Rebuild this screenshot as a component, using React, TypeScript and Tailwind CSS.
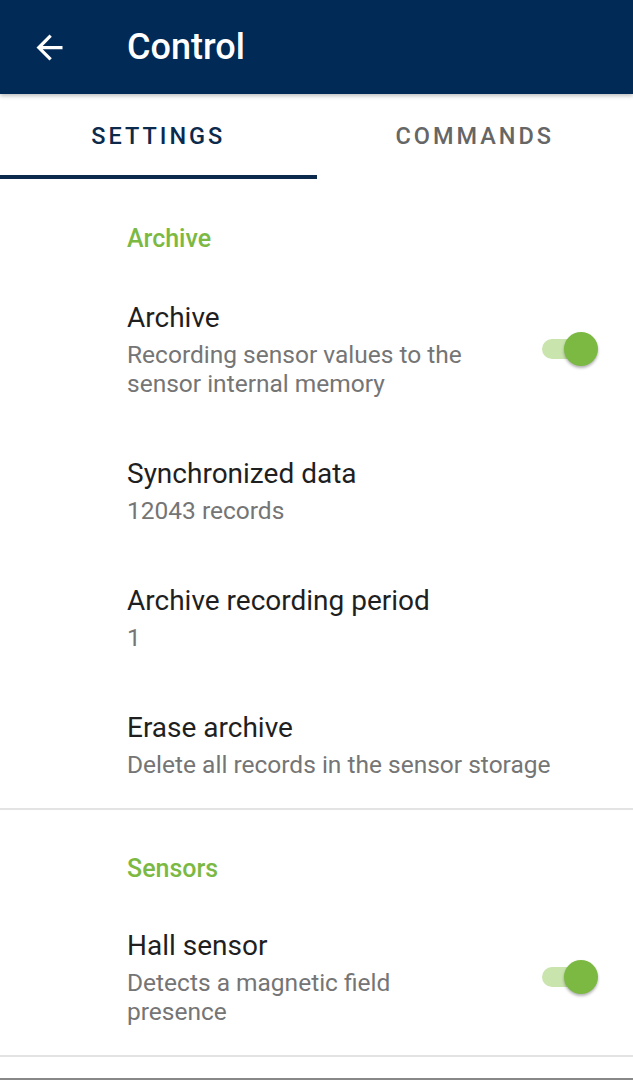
import React from "react";

function Toggle() {
  return (
    <div className="relative w-[58px] h-[36px] flex items-center shrink-0">
      <div className="absolute left-[2px] top-[8px] w-[50px] h-[20px] rounded-full bg-[#c9e4ad]" />
      <div className="absolute right-0 top-[1px] w-[34px] h-[34px] rounded-full bg-[#7cb943] shadow-[0_2px_3px_rgba(0,0,0,0.3)]" />
    </div>
  );
}

function SectionHeader({ label, first }: { label: string; first?: boolean }) {
  return (
    <div className={first ? "h-[91px] shrink-0 pl-[127px] pt-[44px]" : "h-[89px] shrink-0 pl-[127px] pt-[44px]"}>
      <div className="text-[25px] leading-[30px] font-medium text-[#7cb943]">{label}</div>
    </div>
  );
}

function Item({
  title,
  subtitle,
  toggle,
}: {
  title: string;
  subtitle: string;
  toggle?: boolean;
}) {
  return (
    <div className="shrink-0 flex items-center pl-[127px] pr-[35px] py-[29px]">
      <div className={toggle ? "flex-1 pr-[60px]" : "flex-1"}>
        <div className="text-[28px] leading-[36px] text-[#1f1f1f]">{title}</div>
        <div className="mt-[4px] text-[24.5px] leading-[29px] text-[#757575]">{subtitle}</div>
      </div>
      {toggle && <Toggle />}
    </div>
  );
}

export default function App() {
  return (
    <div
      className="w-[633px] h-[1080px] bg-white overflow-hidden flex flex-col"
      style={{ fontFamily: "Roboto, 'Noto Sans', sans-serif" }}
    >
      <div className="relative z-10 shrink-0 h-[94px] bg-[#012a56] flex items-center shadow-[0_2px_4px_rgba(0,0,0,0.25)]">
        <svg
          className="ml-[30px]"
          width="39"
          height="39"
          viewBox="0 0 24 24"
          fill="white"
        >
          <path d="M20 11H7.83l5.59-5.59L12 4l-8 8 8 8 1.41-1.41L7.83 13H20v-2z" />
        </svg>
        <div className="ml-[58px] text-[36px] font-medium text-white leading-none">Control</div>
      </div>
      <div className="flex shrink-0 h-[86px]">
        <div className="w-1/2 flex flex-col">
          <div className="flex-1 flex items-center justify-center text-[23.5px] font-medium tracking-[3px] text-[#0c2a4c] pt-[5px]">
            SETTINGS
          </div>
          <div className="h-[4px] bg-[#0c2a4c] mb-[1px]" />
        </div>
        <div className="w-1/2 flex items-center justify-center text-[23.5px] font-medium tracking-[3px] text-[#666666]">
          COMMANDS
        </div>
      </div>
      <SectionHeader label="Archive" first />
      <Item
        title="Archive"
        subtitle="Recording sensor values to the sensor internal memory"
        toggle
      />
      <Item title="Synchronized data" subtitle="12043 records" />
      <Item title="Archive recording period" subtitle="1" />
      <Item title="Erase archive" subtitle="Delete all records in the sensor storage" />
      <div className="shrink-0 h-[2px] bg-[#e3e3e3]" />
      <SectionHeader label="Sensors" />
      <Item
        title="Hall sensor"
        subtitle="Detects a magnetic field presence"
        toggle
      />
      <div className="shrink-0 h-[2px] bg-[#e3e3e3]" />
      <div className="shrink-0 h-[21px]" />
      <div className="shrink-0 h-[3px] bg-[#888888]" />
    </div>
  );
}
